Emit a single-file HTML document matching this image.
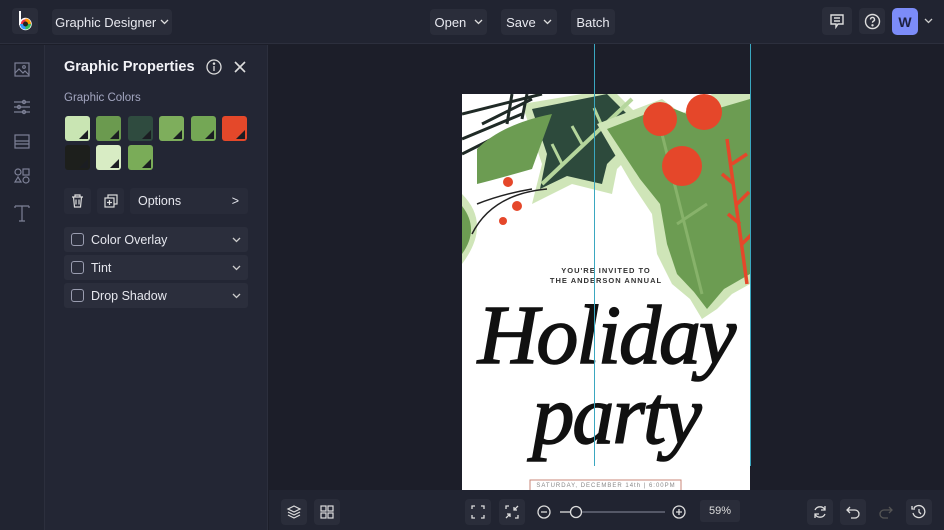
<!DOCTYPE html>
<html><head><meta charset="utf-8"><style>
*{box-sizing:border-box;margin:0;padding:0}
body{width:944px;height:530px;overflow:hidden;background:#1c1e29;font-family:"Liberation Sans",sans-serif;color:#e6e7ee;position:relative}
.hdr{position:absolute;left:0;top:0;width:944px;height:44px;background:#212431;border-bottom:1px solid #2c2f3d}
.btn{position:absolute;background:#2a2d3a;border-radius:4px;font-size:13px;color:#e8e9f0;display:flex;align-items:center;justify-content:center}
.rail{position:absolute;left:0;top:45px;width:45px;height:485px;background:#212431;border-right:1px solid #2c2f3d}
.panel{position:absolute;left:45px;top:45px;width:223px;height:485px;background:#232634;border-right:1px solid #2c2f3d}
.sw{position:absolute;width:25px;height:25px;border-radius:3px;overflow:hidden}
.sw:after{content:"";position:absolute;right:2px;bottom:2px;border-left:9px solid transparent;border-bottom:9px solid #1b1d22}
.row{position:absolute;left:19px;width:184px;height:25px;background:#2b2e3c;border-radius:3px;font-size:12.5px;display:flex;align-items:center}
.cb{width:13px;height:13px;border:1.3px solid #9a9db0;border-radius:3px;margin:0 7px 0 7px}
.chev{position:absolute;right:7px;top:5px}
.bot{position:absolute;left:269px;top:490px;width:675px;height:40px;background:#212431}
.ib{position:absolute;top:9px;width:26px;height:26px;background:#2a2d3a;border-radius:4px}
</style></head><body>
<div class="hdr">
 <div class="btn" style="left:12px;top:8px;width:26px;height:26px;background:#2a2d3a">
  <svg width="18" height="22" viewBox="0 0 18 22"><path d="M4 1v14" stroke="#fff" stroke-width="2"/><circle cx="9.5" cy="14" r="5.5" fill="#e34"/><circle cx="9.5" cy="14" r="5.5" fill="none" stroke="#fff" stroke-width="1.5"/><path d="M9.5 8.5a5.5 5.5 0 0 1 5.5 5.5h-5.5z" fill="#f90"/><path d="M9.5 14h5.5a5.5 5.5 0 0 1-5.5 5.5z" fill="#3b5"/><path d="M9.5 14v5.5A5.5 5.5 0 0 1 4 14z" fill="#39f"/><circle cx="9.5" cy="14" r="2.5" fill="#222"/></svg>
 </div>
 <div class="btn" style="left:52px;top:9px;width:120px;height:26px">Graphic Designer&nbsp;<svg width="9" height="6" viewBox="0 0 9 6"><path d="M1 1l3.5 3.5L8 1" stroke="#ddd" fill="none" stroke-width="1.3"/></svg></div>
 <div class="btn" style="left:430px;top:9px;width:57px;height:26px">Open&nbsp;&nbsp;<svg width="9" height="6" viewBox="0 0 9 6"><path d="M1 1l3.5 3.5L8 1" stroke="#ddd" fill="none" stroke-width="1.3"/></svg></div>
 <div class="btn" style="left:501px;top:9px;width:56px;height:26px">Save&nbsp;&nbsp;<svg width="9" height="6" viewBox="0 0 9 6"><path d="M1 1l3.5 3.5L8 1" stroke="#ddd" fill="none" stroke-width="1.3"/></svg></div>
 <div class="btn" style="left:571px;top:9px;width:44px;height:26px">Batch</div>
 <div class="btn" style="left:822px;top:7px;width:30px;height:28px"><svg width="16" height="16" viewBox="0 0 16 16" fill="none" stroke="#ddd" stroke-width="1.4"><path d="M2 2h12v9H9l-2 3v-3H2z"/><path d="M5 5h6M5 8h6"/></svg></div>
 <div class="btn" style="left:859px;top:8px;width:26px;height:26px"><svg width="17" height="17" viewBox="0 0 17 17" fill="none" stroke="#ddd" stroke-width="1.4"><circle cx="8.5" cy="8.5" r="7"/><path d="M6.5 6.5a2 2 0 1 1 2.8 1.8c-.6.3-.8.7-.8 1.4"/><circle cx="8.5" cy="12.3" r=".5" fill="#ddd"/></svg></div>
 <div class="btn" style="left:892px;top:8px;width:26px;height:27px;background:#7c8cf8;color:#1d2040;font-weight:bold;font-size:14px;border-radius:5px">W</div>
 <svg style="position:absolute;left:924px;top:18px" width="9" height="6" viewBox="0 0 9 6"><path d="M1 1l3.5 3.5L8 1" stroke="#ccc" fill="none" stroke-width="1.3"/></svg>
</div>
<div class="rail">
 <svg style="position:absolute;left:13px;top:16px" width="18" height="180" viewBox="0 0 18 180" fill="none" stroke="#7d8096" stroke-width="1.2">
  <rect x="2" y="2" width="14" height="13"/><path d="M2 12l4-4 4 4 2-2 4 4"/><circle cx="11" cy="6" r="1.3"/>
  <path d="M1 41h16M1 46h16M1 51h16"/><circle cx="11" cy="41" r="1.6"/><circle cx="6" cy="46" r="1.6"/><circle cx="11" cy="51" r="1.6"/>
  <rect x="2" y="74" width="14" height="13"/><path d="M2 80h14M2 83h14"/>
  <circle cx="5" cy="111" r="3"/><rect x="10" y="108" width="6" height="6"/><path d="M5 116l3 5H2z"/><circle cx="13" cy="119" r="3"/>
  <path d="M2 145h14M9 145v15M6 160h6M2 145v2M16 145v2"/>
 </svg>
</div>
<div class="panel">
 <div style="position:absolute;left:19px;top:14px;font-size:14.5px;font-weight:bold;color:#f2f2f7">Graphic Properties</div>
 <svg style="position:absolute;left:161px;top:14px" width="16" height="16" viewBox="0 0 16 16" fill="none" stroke="#ddd" stroke-width="1.3"><circle cx="8" cy="8" r="7"/><path d="M8 7v5"/><circle cx="8" cy="4.6" r=".6" fill="#ddd"/></svg>
 <svg style="position:absolute;left:189px;top:16px" width="12" height="12" viewBox="0 0 12 12" stroke="#ddd" stroke-width="1.6"><path d="M1 1l10 10M11 1L1 11"/></svg>
 <div style="position:absolute;left:19px;top:47px;font-size:11.5px;color:#a3a6c0">Graphic Colors</div>
 <div class="sw" style="left:20px;top:71px;background:#c9e5b3"></div>
 <div class="sw" style="left:51px;top:71px;background:#6b9a4f"></div>
 <div class="sw" style="left:83px;top:71px;background:#2f4b3f"></div>
 <div class="sw" style="left:114px;top:71px;background:#7eae5c"></div>
 <div class="sw" style="left:146px;top:71px;background:#74a755"></div>
 <div class="sw" style="left:177px;top:71px;background:#e4482a"></div>
 <div class="sw" style="left:20px;top:100px;background:#1d1f1c"></div>
 <div class="sw" style="left:51px;top:100px;background:#d8ecc4"></div>
 <div class="sw" style="left:83px;top:100px;background:#7aac58"></div>
 <div style="position:absolute;left:19px;top:143px;width:27px;height:26px;background:#282b39;border-radius:3px"><svg style="margin:6px 7px" width="13" height="14" viewBox="0 0 13 14" fill="none" stroke="#ddd" stroke-width="1.2"><path d="M1 3h11M4 3V1h5v2M2.5 3l1 10h6l1-10M5 5.5v5M8 5.5v5"/></svg></div>
 <div style="position:absolute;left:52px;top:143px;width:27px;height:26px;background:#282b39;border-radius:3px"><svg style="margin:6px 7px" width="14" height="14" viewBox="0 0 14 14" fill="none" stroke="#ddd" stroke-width="1.2"><rect x="4" y="1" width="9" height="9"/><rect x="1" y="4" width="9" height="9" fill="#282b39"/><path d="M5.5 6v5M3 8.5h5"/></svg></div>
 <div style="position:absolute;left:85px;top:143px;width:118px;height:26px;background:#282b39;border-radius:3px;font-size:12.5px;padding:6px 8px">Options<span style="position:absolute;right:9px;top:6px">&gt;</span></div>
 <div class="row" style="top:182px"><div class="cb"></div>Color Overlay<svg class="chev" style="top:10px" width="9" height="6" viewBox="0 0 9 6"><path d="M1 1l3.5 3.5L8 1" stroke="#ccc" fill="none" stroke-width="1.3"/></svg></div>
 <div class="row" style="top:210px"><div class="cb"></div>Tint<svg class="chev" style="top:10px" width="9" height="6" viewBox="0 0 9 6"><path d="M1 1l3.5 3.5L8 1" stroke="#ccc" fill="none" stroke-width="1.3"/></svg></div>
 <div class="row" style="top:238px"><div class="cb"></div>Drop Shadow<svg class="chev" style="top:10px" width="9" height="6" viewBox="0 0 9 6"><path d="M1 1l3.5 3.5L8 1" stroke="#ccc" fill="none" stroke-width="1.3"/></svg></div>
</div>
<div style="position:absolute;left:462px;top:94px;width:288px;height:396px;background:#fff;overflow:hidden">
 <svg width="288" height="396" viewBox="0 0 288 396" style="position:absolute;left:0;top:0">
  <path d="M60 10 L150 -5 L175 20 L170 60 L155 75 L150 100 L110 90 L70 110 L80 70 Z" fill="#cfe5b8"/>
  <path d="M70 15 L145 0 L165 20 L160 55 L145 70 L140 90 L105 82 L78 95 L85 60 Z" fill="#2d4a3c"/>
  <path d="M80 90 L170 5" stroke="#b5d69c" stroke-width="4"/>
  <path d="M100 70l-10-20M120 50l-10-18M140 32l-8-18" stroke="#b5d69c" stroke-width="3"/>
  <path d="M135 30 L200 5 L220 20 L250 0 L288 0 L288 190 L270 200 L255 215 L240 225 L228 205 L210 190 L195 160 L190 120 L170 90 Z" fill="#cfe5b8"/>
  <path d="M145 35 L205 12 L230 22 L288 5 L288 180 L262 195 L245 215 L232 198 L215 180 L205 150 L198 110 L178 85 Z" fill="#6c9c52"/>
  <path d="M200 40 L240 200M205 80l25-15M215 130l30-20" stroke="#87b26a" stroke-width="3"/>
  <path d="M265 45 L285 190M270 70l15-10M272 90l-12-10M275 110l12-12M278 130l-12-10M280 150l10-10" stroke="#e5472a" stroke-width="3.5"/>
  <circle cx="198" cy="25" r="17" fill="#e5472a"/><circle cx="242" cy="18" r="18" fill="#e5472a"/><circle cx="220" cy="72" r="20" fill="#e5472a"/>
  <path d="M0 20 L80 0M20 30 L70 5M0 45 L60 20M0 60 L40 40M50 0 L45 30M65 0 L60 25" stroke="#1f2a26" stroke-width="3"/>
  <path d="M15 55 Q40 30 90 20 L70 75 Q35 85 15 90Z" fill="#6c9c52"/>
  <path d="M0 100 Q30 130 0 170Z" fill="#cfe5b8"/><path d="M0 112 Q18 135 0 160Z" fill="#6c9c52"/>
  <path d="M10 140 Q30 100 85 95M15 110 Q40 100 70 95" stroke="#222" stroke-width="1.5" fill="none"/>
  <circle cx="46" cy="88" r="5" fill="#e5472a"/><circle cx="55" cy="112" r="5" fill="#e5472a"/><circle cx="41" cy="127" r="4" fill="#e5472a"/>
  <rect x="68" y="386" width="151" height="20" fill="none" stroke="#c9877a" stroke-width="1"/>
 </svg>
 <div style="position:absolute;left:0;width:288px;top:172px;text-align:center;font-size:7.5px;letter-spacing:1px;font-weight:bold;color:#333;line-height:10px">YOU'RE INVITED TO<br>THE ANDERSON ANNUAL</div>
 <div style="position:absolute;left:10px;width:268px;top:202px;text-align:center;font-family:'Liberation Serif',serif;font-style:italic;font-size:84px;color:#111;line-height:80px;letter-spacing:-2px;-webkit-text-stroke:1.5px #111">Holiday<br><span style="padding-left:20px">party</span></div>
 <div style="position:absolute;left:0;width:288px;top:389px;text-align:center;font-size:6px;letter-spacing:1px;color:#888">SATURDAY, DECEMBER 14th | 6:00PM</div>
</div>
<div style="position:absolute;left:462px;top:44px;width:288px;height:50px;background:#1c1e29"></div>
<div style="position:absolute;left:594px;top:44px;width:1px;height:422px;background:#3aa7c0"></div>
<div style="position:absolute;left:750px;top:44px;width:1px;height:422px;background:#3aa7c0"></div>
<div class="bot">
 <div class="ib" style="left:12px"><svg style="margin:5px" width="16" height="16" viewBox="0 0 16 16" fill="none" stroke="#ddd" stroke-width="1.2"><path d="M8 2l6 3-6 3-6-3z"/><path d="M2 8l6 3 6-3M2 11l6 3 6-3"/></svg></div>
 <div class="ib" style="left:45px"><svg style="margin:6px" width="14" height="14" viewBox="0 0 14 14" fill="none" stroke="#ddd" stroke-width="1.2"><rect x="1" y="1" width="5" height="5"/><rect x="8" y="1" width="5" height="5"/><rect x="1" y="8" width="5" height="5"/><rect x="8" y="8" width="5" height="5"/></svg></div>
 <div class="ib" style="left:196px"><svg style="margin:6px" width="14" height="14" viewBox="0 0 14 14" fill="none" stroke="#ddd" stroke-width="1.3"><path d="M1 4V1h3M10 1h3v3M13 10v3h-3M4 13H1v-3"/></svg></div>
 <div class="ib" style="left:230px"><svg style="margin:6px" width="14" height="14" viewBox="0 0 14 14" fill="none" stroke="#ddd" stroke-width="1.3"><path d="M1 4V1h3M13 1L9 5M9 2v3h3M1 13l4-4M2 9h3v3M10 13h3v-3"/></svg></div>
 <svg style="position:absolute;left:267px;top:14px" width="150" height="16" viewBox="0 0 150 16" fill="none" stroke="#ddd" stroke-width="1.3"><circle cx="8" cy="8" r="6"/><path d="M5 8h6"/><path d="M24 8h10"/><circle cx="40" cy="8" r="5.5"/><path d="M46 8h83" stroke="#555867" stroke-width="2"/><circle cx="143" cy="8" r="6"/><path d="M140 8h6M143 5v6"/></svg>
 <div style="position:absolute;left:431px;top:10px;width:40px;height:22px;background:#2a2d3a;border-radius:3px;font-size:11px;text-align:center;line-height:22px;color:#ddd">59%</div>
 <div class="ib" style="left:538px"><svg style="margin:5px" width="16" height="16" viewBox="0 0 16 16" fill="none" stroke="#ddd" stroke-width="1.3"><path d="M3 6a5.5 5.5 0 0 1 10 0M13 10a5.5 5.5 0 0 1-10 0M13 2v4h-4M3 14v-4h4"/></svg></div>
 <div class="ib" style="left:571px"><svg style="margin:6px" width="14" height="14" viewBox="0 0 14 14" fill="none" stroke="#ddd" stroke-width="1.3"><path d="M4 2L1 5l3 3M1 5h8a4 4 0 0 1 0 8H5"/></svg></div>
 <div style="position:absolute;left:604px;top:9px;width:26px;height:26px"><svg style="margin:6px" width="14" height="14" viewBox="0 0 14 14" fill="none" stroke="#555" stroke-width="1.3"><path d="M10 2l3 3-3 3M13 5H5a4 4 0 0 0 0 8h4"/></svg></div>
 <div class="ib" style="left:637px"><svg style="margin:5px" width="16" height="16" viewBox="0 0 16 16" fill="none" stroke="#ddd" stroke-width="1.3"><path d="M3 4a6 6 0 1 1-1 5M1 2v3h3M8 5v3l2 2"/></svg></div>
</div>
</body></html>
